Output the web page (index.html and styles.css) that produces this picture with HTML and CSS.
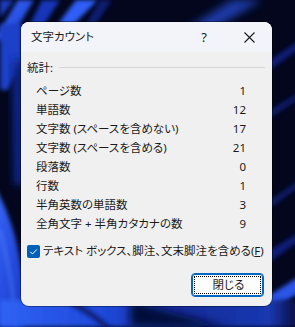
FILE: index.html
```html
<!DOCTYPE html>
<html lang="ja">
<head>
<meta charset="utf-8">
<link rel="stylesheet" href="styles.css">
</head>
<body>
<div class="desktop">
  <svg class="wallpaper" viewBox="0 0 295 327" width="295" height="327" aria-hidden="true">
    <defs>
      <filter id="b2" x="-20%" y="-20%" width="140%" height="140%"><feGaussianBlur stdDeviation="2"/></filter>
      <filter id="b4" x="-30%" y="-30%" width="160%" height="160%"><feGaussianBlur stdDeviation="4"/></filter>
      <linearGradient id="gBright" x1="0" y1="0" x2="1" y2="1">
        <stop offset="0" stop-color="#3d6cff"/>
        <stop offset="1" stop-color="#1537c8"/>
      </linearGradient>
      <linearGradient id="gBottom" x1="0" y1="0" x2="1" y2="0">
        <stop offset="0" stop-color="#2f62f4"/>
        <stop offset="0.35" stop-color="#1f48d8"/>
        <stop offset="0.6" stop-color="#122c9a"/>
        <stop offset="0.9" stop-color="#1a38b0"/>
        <stop offset="1" stop-color="#050a30"/>
      </linearGradient>
    </defs>
    <rect width="295" height="327" fill="#03061c"/>
    <polygon points="0,0 14,0 0,18" fill="#1a3cc0" filter="url(#b2)"/>
    <polygon points="18,0 34,0 10,40 -6,40" fill="url(#gBright)" filter="url(#b2)"/>
    <polygon points="42,0 60,0 34,40 22,40" fill="#1736b8" filter="url(#b2)"/>
    <polygon points="76,0 98,0 74,24 58,24" fill="#2f5ef8" filter="url(#b2)"/>
    <polygon points="100,0 112,0 96,24 86,24" fill="#0c1a70" filter="url(#b2)"/>
    <polygon points="0,24 22,24 22,60 8,90 0,90" fill="#1b40c8" filter="url(#b2)"/>
    <polygon points="12,60 24,60 24,185 14,185" fill="#0f2590" filter="url(#b4)"/>
    <path d="M-10,180 C10,210 22,250 24,300 L24,327 L-10,327 Z" fill="url(#gBright)" filter="url(#b2)"/>
    <path d="M0,230 C8,260 14,290 16,327" stroke="#5d88ff" stroke-width="2" fill="none" filter="url(#b2)" opacity="0.7"/>
    <polygon points="185,30 232,0 262,0 212,30" fill="#1a3aa8" filter="url(#b4)"/>
    <polygon points="270,60 300,40 300,48 270,70" fill="#0d1e78" filter="url(#b2)"/>
    <polygon points="270,110 300,92 300,98 270,118" fill="#0b1a68" filter="url(#b2)"/>
    <polygon points="270,200 300,180 300,186 270,208" fill="#0b1a68" filter="url(#b2)"/>
    <polygon points="270,250 300,232 300,240 270,262" fill="#0d1e78" filter="url(#b2)"/>
    <polygon points="262,300 300,276 300,292 262,318" fill="#2a55e6" filter="url(#b2)"/>
    <path d="M0,300 L300,300 L300,327 L0,327 Z" fill="url(#gBottom)" filter="url(#b2)"/>
    <path d="M130,300 C170,312 200,320 230,327 L130,327 Z" fill="#060c3a" filter="url(#b4)"/>
    <path d="M70,302 C90,312 100,320 110,330" stroke="#0a1a6a" stroke-width="5" fill="none" filter="url(#b2)"/>
  </svg>

  <div class="dialog">
    <div class="titlebar">
      <span class="title">文字カウント</span>
      <span class="tb-btn help">?</span>
      <span class="tb-btn close">
        <svg width="11" height="11" viewBox="0 0 11 11"><path d="M0.5,0.5 L10.5,10.5 M10.5,0.5 L0.5,10.5" stroke="#1b1b1b" stroke-width="1.1" fill="none"/></svg>
      </span>
    </div>
    <div class="body">
      <div class="group-head">
        <span class="group-label">統計:</span>
        <span class="group-line"></span>
      </div>
      <div class="stats">
        <div class="row"><span>ページ数</span><span class="num">1</span></div>
        <div class="row"><span>単語数</span><span class="num">12</span></div>
        <div class="row"><span>文字数 (スペースを含めない)</span><span class="num">17</span></div>
        <div class="row"><span>文字数 (スペースを含める)</span><span class="num">21</span></div>
        <div class="row"><span>段落数</span><span class="num">0</span></div>
        <div class="row"><span>行数</span><span class="num">1</span></div>
        <div class="row"><span>半角英数の単語数</span><span class="num">3</span></div>
        <div class="row"><span>全角文字 + 半角カタカナの数</span><span class="num">9</span></div>
      </div>
      <label class="check">
        <span class="box"><svg width="13" height="13" viewBox="0 0 13 13"><path d="M3.3,6.8 L5.5,9 L9.8,4.5" stroke="#ffffff" stroke-width="1" fill="none"/></svg></span>
        <span class="check-text">テキスト ボックス、脚注、文末脚注を含める(<u>F</u>)</span>
      </label>
      <div class="actions">
        <button class="btn"><span class="focus">閉じる</span></button>
      </div>
    </div>
  </div>
</div>
</body>
</html>
```

FILE: styles.css
```css
* { box-sizing: border-box; }
html, body { margin: 0; padding: 0; }
body {
  width: 295px;
  height: 327px;
  overflow: hidden;
  background: #03061c;
  font-family: "Noto Sans", "Noto Sans CJK JP", sans-serif;
  font-size: 11.5px;
  color: #1b1b1b;
}
.desktop {
  position: relative;
  width: 295px;
  height: 327px;
  padding: 22px 0 0 21px;
}
.wallpaper {
  position: absolute;
  left: 0;
  top: 0;
  display: block;
}
.dialog {
  position: relative;
  width: 251px;
  height: 284px;
  border-radius: 8px;
  background: #f0f0f0;
  overflow: hidden;
  box-shadow: 0 0 0 1px rgba(0,0,0,0.35);
}
.titlebar {
  height: 30px;
  background: #f3f4f9;
  display: flex;
  align-items: center;
  padding-left: 10px;
}
.title {
  flex: 1;
  font-feature-settings: "palt";
  font-size: 11.5px;
  line-height: 16px;
}
.tb-btn {
  width: 44px;
  height: 30px;
  display: flex;
  align-items: center;
  justify-content: center;
}
.help { font-size: 13px; margin-right: 1px; }
.close { margin-right: 1px; }
.close svg { display: block; }
.body {
  padding: 8px 7px 0 6px;
  font-feature-settings: "palt";
}
.group-head {
  height: 16px;
  display: flex;
  align-items: center;
  gap: 6px;
}
.group-label { line-height: 16px; }
.group-line {
  flex: 1;
  height: 1px;
  background: #d6d6d6;
  margin-top: -1px;
}
.stats {
  margin-top: 5px;
  padding: 0 19px 0 9px;
}
.row {
  height: 19px;
  display: flex;
  align-items: center;
  justify-content: space-between;
  line-height: 16px;
}
.num { text-align: right; }
.check {
  margin-top: 10px;
  height: 16px;
  display: flex;
  align-items: center;
  gap: 3px;
}
.box {
  width: 13px;
  height: 13px;
  border-radius: 2px;
  background: #005fb8;
  display: block;
}
.box svg { display: block; }
.check-text { line-height: 16px; white-space: nowrap; }
.check-text u { text-underline-offset: 1px; }
.actions {
  margin-top: 14px;
  display: flex;
  justify-content: flex-end;
  padding-right: 1px;
}
.btn {
  width: 73px;
  height: 24px;
  padding: 2px;
  border: 1px solid #0067c0;
  box-shadow: inset 0 0 0 1px #0067c0;
  border-radius: 4px;
  background: #fdfdfd;
  font: inherit;
  color: #1b1b1b;
  display: flex;
}
.focus {
  flex: 1;
  border: 1px dotted #000;
  display: flex;
  align-items: center;
  justify-content: center;
  line-height: 14px;
  padding-left: 2px;
}
```
